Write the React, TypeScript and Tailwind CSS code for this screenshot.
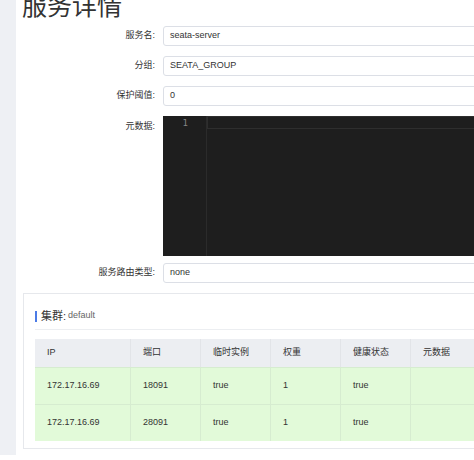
import React from 'react';

const font = { fontFamily: '"Liberation Sans", "Noto Sans CJK SC", sans-serif' };

interface Instance {
    ip: string;
    port: string;
    ephemeral: string;
    weight: string;
    healthy: string;
    metadata: string;
}

const instances: Instance[] = [
    { ip: '172.17.16.69', port: '18091', ephemeral: 'true', weight: '1', healthy: 'true', metadata: '' },
    { ip: '172.17.16.69', port: '28091', ephemeral: 'true', weight: '1', healthy: 'true', metadata: '' },
];

function FormRow({ label, value }: { label: string; value: string }) {
    return (
        <div className="flex items-center h-[20px]">
            <div className="w-[147px] pr-[8px] text-right text-[9px] text-[#333]">{label}:</div>
            <div className="flex-1 h-[20px] border border-[#dcdfe6] rounded-[3px] bg-white pl-[6px] flex items-center text-[9px] text-[#333] whitespace-nowrap overflow-hidden -mr-[4px]">
                {value}
            </div>
        </div>
    );
}

export default function App() {
    const cols = ['IP', '端口', '临时实例', '权重', '健康状态', '元数据'];
    const widths = ['w-[96px]', 'w-[70px]', 'w-[70px]', 'w-[70px]', 'w-[70px]', 'flex-1'];

    return (
        <div className="w-[474px] h-[460px] overflow-hidden flex bg-white" style={font}>
            {/* 왼쪽 회색 바 */}
            <div className="w-[16px] h-[455px] bg-[#eef0f4] shrink-0" />

            <div className="flex-1 flex flex-col min-w-0">
                <div className="h-[26px] overflow-visible">
                    <h1 className="text-[25px] leading-[25px] -mt-[6px] ml-[6px] text-[#333] font-normal whitespace-nowrap">服务详情</h1>
                </div>

                <div className="flex flex-col gap-[10px]">
                    <FormRow label="服务名" value="seata-server" />
                    <FormRow label="分组" value="SEATA_GROUP" />
                    <FormRow label="保护阈值" value="0" />
                </div>

                {/* 元数据 에디터 */}
                <div className="flex mt-[10px]">
                    <div className="w-[147px] pr-[8px] text-right text-[9px] text-[#333] pt-[4px]">元数据:</div>
                    <div className="flex-1 h-[140px] bg-[#1e1e1e] flex -mr-[4px]">
                        <div className="w-[44px] border-r border-[#2b2b2b] text-[9px] text-[#858585] text-right pr-[18px] leading-[13px] pt-[1px]" style={{ fontFamily: '"DejaVu Sans Mono", monospace' }}>
                            1
                        </div>
                        <div className="flex-1">
                            <div className="h-[13px] border border-[#2e2e2e]" />
                        </div>
                    </div>
                </div>

                <div className="mt-[7px]">
                    <FormRow label="服务路由类型" value="none" />
                </div>

                {/* 클러스터 카드 */}
                <div className="mt-[10px] ml-[7px] -mr-[4px] border border-[#e6e8ec] pl-[11px] pt-[14px] pb-[7px]">
                    <div className="flex items-center h-[16px]">
                        <div className="w-[2px] h-[11px] bg-[#4c7be6] mr-[4px]" />
                        <span className="text-[11px] text-[#333]">集群:</span>
                        <span className="text-[9px] text-[#666] ml-[2px]">default</span>
                    </div>
                    <div className="border-b border-[#eceef1] mt-[5px]" />

                    <div className="mt-[9px] flex flex-col text-[9px] text-[#333]">
                        <div className="flex h-[28px] bg-[#eceef2]">
                            {cols.map((c, i) => (
                                <div key={c} className={`${widths[i]} flex items-center pl-[12px] ${i < cols.length - 1 ? 'border-r border-[#e2e4e8]' : ''}`}>
                                    {c}
                                </div>
                            ))}
                        </div>
                        {instances.map((row, idx) => {
                            const cells = [row.ip, row.port, row.ephemeral, row.weight, row.healthy, row.metadata];
                            return (
                                <div key={idx} className="flex h-[37px] bg-[#e2fad9] border-t border-[#d6ecd0]">
                                    {cells.map((v, i) => (
                                        <div key={i} className={`${widths[i]} flex items-center pl-[12px] ${i < cells.length - 1 ? 'border-r border-[#d6ecd0]' : ''}`}>
                                            {v}
                                        </div>
                                    ))}
                                </div>
                            );
                        })}
                    </div>
                </div>
            </div>
        </div>
    );
}
